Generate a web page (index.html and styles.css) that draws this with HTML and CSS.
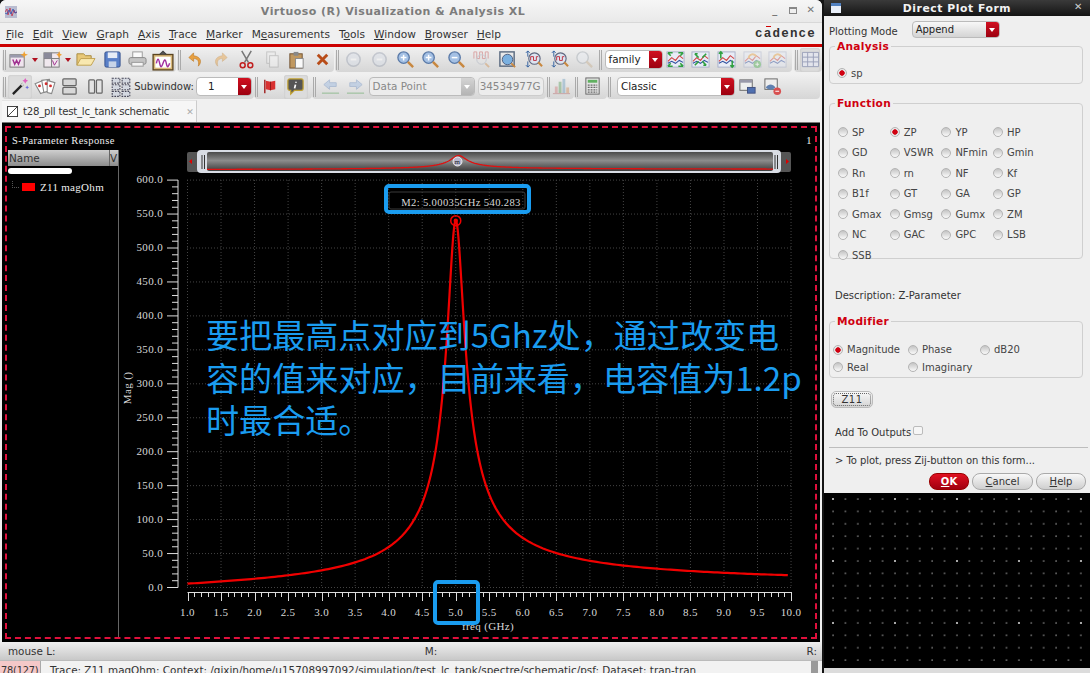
FILE: index.html
```html
<!DOCTYPE html>
<html lang="en">
<head>
    <meta charset="UTF-8">
    <title>Virtuoso (R) Visualization &amp; Analysis XL</title>
    <link rel="stylesheet" href="styles.css">
</head>
<body>
<div class="main">
    <div class="titlebar">
        <svg class="app-icon" viewBox="0 0 12 12"><rect width="12" height="12" fill="#b9bcd0"/><path d="M0 6l2-3 1 6 2-7 2 8 2-6 1 3 2-1" fill="none" stroke="#c0304a" stroke-width=".8"/><path d="M0 7l2 1 2-4 2 4 2-5 2 4 2-1" fill="none" stroke="#3050b0" stroke-width=".8"/></svg>
        <span class="title-text">Virtuoso (R) Visualization &amp; Analysis XL</span>
        <div class="win-btns"><span>_</span><span class="win-max"></span><span>✕</span></div>
    </div>

    <div class="menubar">
        <span><u>F</u>ile</span><span><u>E</u>dit</span><span><u>V</u>iew</span><span><u>G</u>raph</span><span><u>A</u>xis</span><span><u>T</u>race</span><span><u>M</u>arker</span><span>M<u>e</u>asurements</span><span>T<u>o</u>ols</span><span><u>W</u>indow</span><span><u>B</u>rowser</span><span><u>H</u>elp</span>
        <span class="logo">c<span class="logo-a">a</span>dence</span>
    </div>
    <div class="redline"></div>

    <div class="tbar">
        <div class="seg seg-a">
            <i class="grip"></i>
            <span class="ib w20"><svg viewBox="0 0 20 20"><rect x="1" y="5" width="15" height="13" fill="#f0e4ee" stroke="#777"/><rect x="1" y="5" width="15" height="3" fill="#9a9aac"/><path d="M4 10l2 5 2-4 2 4 2-5" fill="none" stroke="#a03090" stroke-width="1.500"/><path d="M16 1l1 3 3 1-3 1-1 3-1-3-3-1 3-1z" fill="#f0a030"/></svg></span>
            <span class="drop w16"></span>
            <span class="ib w17"><svg viewBox="0 0 20 20"><rect x="1" y="3" width="16" height="15" fill="#f0e8ee" stroke="#777"/><path d="M1 9h16M9 3v15" stroke="#777"/><rect x="1" y="3" width="8" height="6" fill="#8a8a9a"/><path d="M10 11l2 5 3-5" fill="none" stroke="#a03090"/><path d="M17 1l1 3 2 1-2 1-1 3-1-3-2-1 2-1z" fill="#f0a030"/></svg></span>
            <span class="drop w14"></span>
            <span class="ib w20 wide"><svg viewBox="0 0 22 20"><path d="M2 16V4h7l2 2h6v3" fill="#e8c878" stroke="#a88a40"/><path d="M2 16l4-7h15l-4 7z" fill="#f8e8b0" stroke="#c0a050"/></svg></span>
            <span class="ib w25 gap5"><svg viewBox="0 0 20 20"><rect x="2" y="2" width="16" height="16" rx="1.500" fill="#5a80c8" stroke="#34508c"/><rect x="5" y="2.500" width="10" height="6" fill="#e6ecf6"/><rect x="6" y="12" width="8" height="6" fill="#c8d4e8"/></svg></span>
            <span class="ib w25"><svg viewBox="0 0 20 20"><rect x="5" y="2" width="10" height="7" fill="#fafafa" stroke="#999"/><rect x="1" y="8" width="18" height="7" rx="2" fill="#c4c4c4" stroke="#888"/><rect x="4" y="13" width="12" height="4" fill="#f4f4f4" stroke="#999"/></svg></span>
            <span class="ib w25"><svg class="big" viewBox="0 0 20 20"><rect x="1" y="5" width="18" height="14" fill="#d8b878" stroke="#5a4420" stroke-width="1.200"/><rect x="3" y="7" width="14" height="10" fill="#fff"/><path d="M4 13c1-5 2-5 3 0s2 3 3 0 2-5 3 0 2 3 3 0" fill="none" stroke="#a030a0" stroke-width="1.300"/><path d="M7 5l3-3 3 3" fill="#555" stroke="#444"/></svg></span>
        </div>
        <div class="seg seg-b">
            <i class="grip"></i>
            <span class="ib w25"><svg viewBox="0 0 20 20"><path d="M8 3L3 8l5 4V9c4 0 6 2 5 8 4-4 3-10-5-11z" fill="#e8a040" stroke="#b87420" stroke-width=".6"/></svg></span>
            <span class="ib w25 dim"><svg viewBox="0 0 20 20"><path d="M12 3l5 5-5 4V9c-4 0-6 2-5 8-4-4-3-10 5-11z" fill="#e8a040" stroke="#b87420" stroke-width=".6"/></svg></span>
            <span class="ib w25"><svg viewBox="0 0 20 20"><path d="M5 1l7 12M15 1L8 13" stroke="#777" stroke-width="1.600"/><circle cx="6" cy="16" r="2.600" fill="none" stroke="#c02020" stroke-width="1.600"/><circle cx="14" cy="16" r="2.600" fill="none" stroke="#c02020" stroke-width="1.600"/></svg></span>
            <span class="ib w25 dim"><svg viewBox="0 0 20 20"><rect x="5" y="2" width="9" height="12" fill="#eee" stroke="#999"/><rect x="8" y="6" width="9" height="12" fill="#f6f6f6" stroke="#999"/></svg></span>
            <span class="ib w25"><svg viewBox="0 0 20 20"><rect x="3" y="4" width="13" height="15" fill="#c09860" stroke="#705030"/><rect x="7" y="2" width="5" height="4" fill="#888"/><rect x="9" y="9" width="8" height="10" fill="#fafafa" stroke="#888"/></svg></span>
            <span class="ib w25"><svg viewBox="0 0 20 20"><path d="M5 5l10 10M15 5L5 15" stroke="#b84c18" stroke-width="3"/></svg></span>
        </div>
        <div class="seg seg-c">
            <i class="grip"></i>
            <span class="ib w25 dim"><svg viewBox="0 0 20 20"><circle cx="10" cy="10" r="7" fill="#d8dee8" stroke="#98a0b0" stroke-width="1.600"/><path d="M7 10h6" stroke="#fff" stroke-width="2"/></svg></span>
            <span class="ib w27 dim"><svg viewBox="0 0 20 20"><circle cx="10" cy="10" r="7" fill="#d8dee8" stroke="#98a0b0" stroke-width="1.600"/><path d="M7 10h6" stroke="#fff" stroke-width="2"/></svg></span>
            <span class="ib w25"><svg viewBox="0 0 20 20"><use href="#mag"/><path d="M5 8h6M8 5v6" stroke="#fff" stroke-width="1.600"/></svg></span>
            <span class="ib w25"><svg viewBox="0 0 20 20"><use href="#mag"/><path d="M5 8h6M8 5v6" stroke="#fff" stroke-width="1.600"/></svg></span>
            <span class="ib w25"><svg viewBox="0 0 20 20"><use href="#mag"/><path d="M5 8h6" stroke="#fff" stroke-width="1.600"/></svg></span>
            <span class="ib w27 dim"><svg viewBox="0 0 20 20"><path d="M2 9V2h3v7h3V2h3v7h3V2h3v7" fill="none" stroke="#c85050"/><circle cx="10" cy="10" r="5" fill="none" stroke="#a0a8b8"/><path d="M14 14l4 4" stroke="#d09050" stroke-width="2"/></svg></span>
            <span class="ib w25"><svg viewBox="0 0 20 20"><rect x="2" y="2" width="15" height="15" fill="none" stroke="#5a6a80" stroke-width="1.500"/><circle cx="10" cy="10" r="5.500" fill="#7ab0e0" stroke="#506080"/><path d="M14 14l4 4" stroke="#c88840" stroke-width="2"/></svg></span>
            <span class="ib w27"><svg viewBox="0 0 20 20"><use href="#wavemag"/></svg></span>
            <span class="ib w25"><svg viewBox="0 0 20 20"><use href="#wavemag"/></svg></span>
            <span class="ib w25 dim"><svg viewBox="0 0 20 20"><circle cx="8" cy="8" r="6" fill="#e8ecf2" stroke="#a0a8b0" stroke-width="1.400"/><path d="M12 12l6 6" stroke="#c8b090" stroke-width="2.400"/></svg></span>
            <i class="grip"></i>
            <div class="combo combo-family"><span class="combo-val">family</span><span class="combo-btn"></span></div>
            <span class="ib w25"><svg viewBox="0 0 20 20"><use href="#trace"/><path d="M2 3h5M2 3l3 3M18 3h-5M18 3l-3 3M2 17h5M2 17l3-3M18 17h-5M18 17l-3-3" stroke="#30a040" stroke-width="1.600" fill="none"/></svg></span>
            <span class="ib w25"><svg viewBox="0 0 20 20"><use href="#trace"/><path d="M4 4l4 4M4 4h3M16 16l-4-4M16 16h-3M16 4l-4 4M4 16l4-4" stroke="#30a040" stroke-width="1.600" fill="none"/></svg></span>
            <span class="ib w26"><svg viewBox="0 0 20 20"><use href="#trace"/><path d="M4 9V2M2 4l2-2 2 2M16 11v7M14 16l2 2 2-2" stroke="#30a040" stroke-width="1.600" fill="none"/></svg></span>
            <span class="ib w26 dim"><svg viewBox="0 0 20 20"><use href="#trace"/><path d="M6 9c0-5 6-6 8-2" fill="none" stroke="#e8a040" stroke-width="2"/><circle cx="15" cy="15" r="4" fill="#50b050"/><path d="M13 15h4M15 13v4" stroke="#fff"/></svg></span>
            <span class="ib w25 dim"><svg viewBox="0 0 20 20"><use href="#trace"/><path d="M6 9c0-5 6-6 8-2" fill="none" stroke="#e8a040" stroke-width="2"/></svg></span>
        </div>
        <div class="seg seg-d">
            <i class="grip"></i>
            <span class="ib btn-on grid-btn"><svg viewBox="0 0 20 20"><path d="M1.500 2.500h17v15h-17zM1.500 7.500h17M1.500 12.500h17M7 2.500v15M13 2.500v15" fill="#e2e4ec" stroke="#9aa0b8"/></svg></span>
        </div>
    </div>

    <div class="tbar tbar-two">
        <div class="seg">
            <i class="grip"></i>
            <span class="ib btn-on wand-btn"><svg viewBox="0 0 20 20"><path d="M2 18L13 7" stroke="#222" stroke-width="2.400"/><path d="M11 9l3-3" stroke="#ddd" stroke-width="2.400"/><path d="M15 1l1 2 2 1-2 1-1 2-1-2-2-1 2-1z" fill="#e060c0"/><path d="M17 9l.7 1.300 1.300.7-1.300.7-.7 1.300-.7-1.300-1.300-.7 1.300-.7z" fill="#7070e0"/></svg></span>
            <span class="ib w25"><svg class="big" viewBox="0 0 20 20"><path d="M1 7l7-3 3 10-5 2z" fill="#fff" stroke="#888"/><path d="M7 4l7-1 1 10-6 2z" fill="#fff" stroke="#888"/><path d="M12 4l7 2-3 10-4-1z" fill="#fff" stroke="#888"/><circle cx="5" cy="9" r="1.300" fill="#d03030"/><circle cx="11" cy="7" r="1.300" fill="#d03030"/><circle cx="15" cy="9" r="1.300" fill="#d03030"/></svg></span>
            <span class="ib w25"><svg viewBox="0 0 20 20"><rect x="3" y="2" width="14" height="7" rx="1" fill="#d8d8d8" stroke="#666" stroke-width="1.300"/><rect x="3" y="11" width="14" height="7" rx="1" fill="#d8d8d8" stroke="#666" stroke-width="1.300"/></svg></span>
            <span class="ib w25"><svg viewBox="0 0 20 20"><rect x="3" y="3" width="6" height="14" rx="1" fill="#e4e4e4" stroke="#666" stroke-width="1.300"/><rect x="11" y="3" width="6" height="14" rx="1" fill="#e4e4e4" stroke="#666" stroke-width="1.300"/></svg></span>
            <span class="ib w25"><svg class="big" viewBox="0 0 20 20"><g fill="#d4d8e0" stroke="#445" stroke-dasharray="1.500 1"><rect x="2" y="2" width="7" height="4.500"/><rect x="11" y="2" width="7" height="4.500"/><rect x="2" y="8" width="7" height="4.500"/><rect x="11" y="8" width="7" height="4.500"/><rect x="2" y="14" width="7" height="4.500"/><rect x="11" y="14" width="7" height="4.500"/></g></svg></span>
            <span class="sub-label">Subwindow:</span>
            <div class="combo combo-sub"><span class="combo-val">1</span><span class="combo-btn"></span></div>
        </div>
        <div class="seg">
            <i class="grip"></i>
            <span class="ib flag-btn"><svg viewBox="0 0 20 20"><path d="M4 3v14" stroke="#a02020" stroke-width="1.500"/><path d="M5 4l5 1 5-1v9l-5 1-5-1z" fill="#d83030"/><path d="M10 5v9" stroke="#901818"/></svg></span>
            <span class="ib btn-on info-btn"><svg viewBox="0 0 20 20"><path d="M4 2h12a2 2 0 012 2v8a2 2 0 01-2 2H9l-4 4v-4H4a2 2 0 01-2-2V4a2 2 0 012-2z" fill="#555" stroke="#c0a030" stroke-width="1.300"/><path d="M10.500 5v1M10 8l-1 4" stroke="#fff" stroke-width="1.800"/></svg></span>
        </div>
        <div class="seg">
            <i class="grip"></i>
            <span class="ib w25 dim"><svg viewBox="0 0 20 20"><path d="M3 8l6-5v3h7v4H9v3z" fill="#9ab8e0" stroke="#7090c0"/><path d="M1 17h18" stroke="#50a050" stroke-width="1.200"/></svg></span>
            <span class="ib w25 dim"><svg viewBox="0 0 20 20"><path d="M17 8l-6-5v3H4v4h7v3z" fill="#9ab8e0" stroke="#7090c0"/><path d="M1 17h18" stroke="#50a050" stroke-width="1.200"/></svg></span>
            <div class="combo combo-point off"><span class="combo-val">Data Point</span><span class="combo-btn"></span></div>
            <div class="field off">34534977G</div>
        </div>
        <div class="seg">
            <i class="grip"></i>
            <span class="ib w20 dim"><svg viewBox="0 0 20 20"><rect x="3" y="10" width="3" height="7" fill="#d08080"/><rect x="7" y="5" width="3" height="12" fill="#60a060"/><rect x="11" y="2" width="3" height="15" fill="#70a0c0"/><rect x="15" y="11" width="3" height="6" fill="#d09060"/><path d="M1 17.500h18" stroke="#b06060"/></svg></span>
        </div>
        <div class="seg">
            <i class="grip"></i>
            <span class="ib w25"><svg viewBox="0 0 20 20"><rect x="3" y="1" width="14" height="17" fill="#e4e4e4" stroke="#666"/><rect x="5" y="3" width="10" height="3" fill="#60b060"/><path d="M5 8.500h10M5 11h10M5 13.500h10M5 16h10" stroke="#666" stroke-dasharray="2 1" stroke-width="1.400"/></svg></span>
        </div>
        <div class="seg seg-last">
            <i class="grip"></i>
            <div class="combo combo-classic"><span class="combo-val">Classic</span><span class="combo-btn"></span></div>
            <span class="ib w25"><svg viewBox="0 0 20 20"><rect x="2" y="3" width="13" height="11" fill="#eee" stroke="#666"/><rect x="2" y="3" width="13" height="3" fill="#99a"/><rect x="10" y="11" width="8" height="6" fill="#5070b0" stroke="#405080"/></svg></span>
            <span class="ib w25"><svg viewBox="0 0 20 20"><rect x="2" y="2" width="13" height="11" fill="#eee" stroke="#666"/><path d="M3 11c3-4 7-4 10 0-3 3-7 3-10 0z" fill="#6080b0"/><circle cx="15" cy="15" r="4" fill="#d85050"/><path d="M13 15h4" stroke="#fff" stroke-width="1.300"/></svg></span>
        </div>
    </div>

    <div class="tabrow">
        <div class="tab">
            <svg class="tab-icon" viewBox="0 0 12 12"><rect x=".5" y=".5" width="11" height="11" fill="#fff" stroke="#333"/><path d="M1 11L11 1" stroke="#333"/></svg>
            <span class="tab-name">t28_pll test_lc_tank schematic</span>
            <span class="tab-x">✕</span>
        </div>
    </div>

    <div class="plot">
        <div class="plot-inner">
            <div class="plot-head"><span>S-Parameter Response</span><span>1</span></div>
            <div class="plot-body">
                <div class="legend">
                    <div class="legend-head"><span>Name</span><span class="legend-v">V</span></div>
                    <div class="legend-pill"></div>
                    <div class="legend-row"><i class="legend-swatch"></i><span>Z11 magOhm</span></div>
                </div>
                <svg class="chart" id="chart" viewBox="119 150 697 486" width="697" height="486"></svg>
            </div>
        </div>
        <div class="callout callout-marker"></div>
        <div class="callout callout-freq"></div>
        <div class="note">要把最高点对应到5Ghz处，通过改变电<br>容的值来对应，目前来看，电容值为1.2p<br>时最合适。</div>
    </div>

    <div class="mousebar"><span>mouse L:</span><span>M:</span><span>R:</span></div>
    <div class="statusbar">
        <span class="status-count">78(127)</span>
        <span class="status-text">Trace: Z11 magOhm: Context: /qixin/home/u15708997092/simulation/test_lc_tank/spectre/schematic/psf: Dataset: tran-tran</span>
        <span class="status-scroll"></span>
    </div>
</div>

<div class="side">
    <div class="side-title">
        <svg class="side-icon" viewBox="0 0 10 10"><rect width="10" height="10" fill="#e8eef8"/><rect width="10" height="3" fill="#5080c0"/></svg>
        <span>Direct Plot Form</span>
        <span class="side-x">✕</span>
    </div>
    <div class="form">
        <div class="mode-row">
            <span>Plotting Mode</span>
            <div class="combo combo-mode"><span class="combo-val">Append</span><span class="combo-btn"></span></div>
        </div>
        <fieldset class="group group-analysis">
            <legend>Analysis</legend>
            <label class="opt"><i class="radio on"></i>sp</label>
        </fieldset>
        <fieldset class="group group-function">
            <legend>Function</legend>
            <div class="func-grid">
                <label class="opt"><i class="radio"></i>SP</label>
                <label class="opt"><i class="radio on"></i>ZP</label>
                <label class="opt"><i class="radio"></i>YP</label>
                <label class="opt"><i class="radio"></i>HP</label>
                <label class="opt"><i class="radio"></i>GD</label>
                <label class="opt"><i class="radio"></i>VSWR</label>
                <label class="opt"><i class="radio"></i>NFmin</label>
                <label class="opt"><i class="radio"></i>Gmin</label>
                <label class="opt"><i class="radio"></i>Rn</label>
                <label class="opt"><i class="radio"></i>rn</label>
                <label class="opt"><i class="radio"></i>NF</label>
                <label class="opt"><i class="radio"></i>Kf</label>
                <label class="opt"><i class="radio"></i>B1f</label>
                <label class="opt"><i class="radio"></i>GT</label>
                <label class="opt"><i class="radio"></i>GA</label>
                <label class="opt"><i class="radio"></i>GP</label>
                <label class="opt"><i class="radio"></i>Gmax</label>
                <label class="opt"><i class="radio"></i>Gmsg</label>
                <label class="opt"><i class="radio"></i>Gumx</label>
                <label class="opt"><i class="radio"></i>ZM</label>
                <label class="opt"><i class="radio"></i>NC</label>
                <label class="opt"><i class="radio"></i>GAC</label>
                <label class="opt"><i class="radio"></i>GPC</label>
                <label class="opt"><i class="radio"></i>LSB</label>
                <label class="opt"><i class="radio"></i>SSB</label>
            </div>
        </fieldset>
        <div class="desc">Description: Z-Parameter</div>
        <fieldset class="group group-modifier">
            <legend>Modifier</legend>
            <div class="mod-grid">
                <label class="opt"><i class="radio on"></i>Magnitude</label>
                <label class="opt"><i class="radio"></i>Phase</label>
                <label class="opt"><i class="radio"></i>dB20</label>
                <label class="opt"><i class="radio"></i>Real</label>
                <label class="opt"><i class="radio"></i>Imaginary</label>
            </div>
        </fieldset>
        <button class="z-btn">Z11</button>
        <div class="add-row">Add To Outputs<i class="check"></i></div>
        <div class="sep"></div>
        <div class="hint">&gt; To plot, press Zij-button on this form...</div>
        <div class="actions">
            <button class="pill pill-ok"><u>O</u>K</button>
            <button class="pill pill-cancel"><u>C</u>ancel</button>
            <button class="pill pill-help"><u>H</u>elp</button>
        </div>
    </div>
    <div class="dots"></div>
</div>

<svg class="defs" width="0" height="0">
    <defs>
        <g id="mag"><circle cx="8" cy="8" r="6" fill="#a4c0e4" stroke="#5a7aa8" stroke-width="1.400"/><path d="M12.500 12.500l5.500 5.500" stroke="#c88840" stroke-width="2.600"/></g>
        <g id="wavemag"><path d="M4 1v6M4 12v6M2 3l2-2 2 2M2 16l2 2 2-2" stroke="#3060a0" fill="none"/><circle cx="11" cy="9" r="6" fill="#dce4f0" stroke="#606880" stroke-width="1.200"/><path d="M7 11V7h3v4h3V7h2" fill="none" stroke="#c03040"/><path d="M15 13l4 4" stroke="#c88840" stroke-width="2.200"/></g>
        <g id="trace"><rect x="1" y="2" width="18" height="16" fill="#e8ecf6" stroke="#a8b0c8"/><path d="M2 12l4-4 4 3 4-5 4 3" fill="none" stroke="#d04040" stroke-width="1.100"/><path d="M2 14l4-2 4 2 4-3 4 2" fill="none" stroke="#3050a0" stroke-width="1.100"/></g>
    </defs>
</svg>
<script src="chart.js"></script>
</body>
</html>
```

FILE: styles.css
```css
html, body {
    margin: 0;
    height: 673px;
    overflow: hidden;
    background: #141414;
}
body {
    display: flex;
    gap: 2px;
    font-family: "DejaVu Sans", sans-serif;
    font-size: 10.4px;
    color: #333;
}
.main {
    width: 822px;
    height: 684px;
    flex: none;
    display: flex;
    flex-direction: column;
    background: #f0f0f0;
    border-radius: 6px 6px 0 0;
    overflow: hidden;
}

/* window title */
.titlebar {
    height: 23px;
    flex: none;
    display: flex;
    align-items: center;
    justify-content: center;
    position: relative;
    background: linear-gradient(#f6f6f6, #e9e9e9);
    border-bottom: 1px solid #d8d8d8;
    box-sizing: border-box;
    font-weight: bold;
    font-size: 11px;
    letter-spacing: 0.45px;
    color: #7c7c7c;
}
.title-text {
    margin-left: -36px;
}
.app-icon {
    position: absolute;
    left: 5px;
    top: 6px;
    width: 12px;
    height: 12px;
}
.win-btns {
    position: absolute;
    right: 6px;
    top: 4px;
    display: flex;
    gap: 8px;
    font-size: 10px;
    color: #777;
}
.win-btns span {
    width: 10px;
    height: 13px;
    text-align: center;
}
.win-btns .win-max {
    width: 8px;
    height: 7px;
    margin: 3px 1px 0;
    border: 1px solid #888;
    border-top-width: 2px;
    box-sizing: border-box;
}

/* menu */
.menubar {
    height: 21px;
    flex: none;
    display: flex;
    align-items: center;
    gap: 9px;
    padding-left: 6px;
    box-sizing: border-box;
    font-size: 10.6px;
    color: #333;
}
.logo {
    margin-left: auto;
    margin-right: 6px;
    font-family: "Liberation Mono", monospace;
    font-size: 12.5px;
    font-weight: bold;
    letter-spacing: 1.2px;
    color: #333;
}
.logo-a {
    position: relative;
}
.logo-a::before {
    content: "";
    position: absolute;
    left: 2px;
    top: -1px;
    width: 5px;
    height: 1px;
    background: #d00000;
}
.redline {
    height: 3px;
    flex: none;
    background: #cc0000;
}

/* toolbars */
.tbar {
    height: 27px;
    flex: none;
    display: flex;
    padding-left: 2px;
    box-sizing: border-box;
}
.tbar-two {
    height: 26px;
}
.seg {
    display: flex;
    align-items: center;
    height: 25px;
    padding-right: 2px;
    box-sizing: border-box;
    border-radius: 0 0 4px 4px;
    background: linear-gradient(#f0f0f0, #d6d6d6);
}
.seg-a {
    width: 174px;
}
.seg-b {
    width: 157px;
    margin-left: 1px;
}
.seg-c {
    margin-left: 1px;
}
.seg-d {
    margin-left: 2px;
    flex: 1;
    margin-right: 2px;
}
.seg-last {
    flex: 1;
    margin-right: 2px;
}
.grip {
    width: 3px;
    height: 20px;
    margin: 0 2px 0 1px;
    flex: none;
    border-left: 1px solid #aaa;
    border-right: 1px solid #aaa;
    box-sizing: border-box;
}
.ib {
    height: 24px;
    flex: none;
    display: flex;
    align-items: center;
    justify-content: center;
}
.ib svg {
    width: 19px;
    height: 19px;
    flex: none;
}
.ib svg.big {
    width: 22px;
    height: 22px;
}
.ib.wide svg {
    width: 21px;
}
.w17 { width: 17px; }
.w20 { width: 20px; }
.w25 { width: 25.3px; }
.w26 { width: 26px; }
.w27 { width: 26.5px; }
.gap5 { margin-left: 5px; }
.dim svg { opacity: 0.45; }
.drop {
    height: 24px;
    flex: none;
    position: relative;
}
.w14 { width: 14px; }
.w16 { width: 16px; }
.drop::after {
    content: "";
    position: absolute;
    left: 4px;
    top: 10px;
    border: 3.5px solid transparent;
    border-top: 4px solid #b01020;
    border-bottom: 0;
}
.btn-on {
    border-radius: 3px;
    background: #dcdcdc;
    box-shadow: inset 0 0 2px #bbb;
}
.wand-btn { width: 24px; }
.flag-btn { width: 22px; }
.info-btn { width: 24px; margin: 0 2px; }
.grid-btn { width: 20px; }
.sub-label {
    margin: 0 2px 0 1px;
    font-size: 10px;
}

/* combos */
.combo {
    height: 19px;
    flex: none;
    display: flex;
    border-radius: 4px;
    border: 1px solid #bbb;
    box-sizing: border-box;
    background: #fff;
    overflow: hidden;
}
.combo-val {
    flex: 1;
    padding-left: 3px;
    line-height: 17px;
    color: #222;
}
.combo-btn {
    width: 13px;
    position: relative;
    background: linear-gradient(#d01020, #9c0010);
}
.combo-btn::after {
    content: "";
    position: absolute;
    left: 3px;
    top: 7px;
    border: 3.5px solid transparent;
    border-top: 4px solid #fff;
    border-bottom: 0;
}
.combo.off {
    background: #ececec;
}
.combo.off .combo-val {
    color: #888;
}
.combo.off .combo-btn {
    background: linear-gradient(#d4d4d4, #b4b4b4);
}
.combo-family { width: 58px; margin-left: 1px; }
.combo-sub { width: 56px; }
.combo-sub .combo-val { padding-left: 11px; }
.combo-point { width: 106px; }
.combo-classic { width: 118px; margin-left: 4px; }
.field {
    width: 66px;
    height: 19px;
    margin-left: 3px;
    border: 1px solid #ccc;
    border-radius: 4px;
    box-sizing: border-box;
    background: #ececec;
    color: #888;
    line-height: 17px;
    text-align: right;
    padding-right: 2px;
    overflow: hidden;
    white-space: nowrap;
}

/* tab */
.tabrow {
    height: 22px;
    flex: none;
    padding-left: 2px;
}
.tab {
    width: 195px;
    height: 22px;
    display: flex;
    align-items: center;
    gap: 5px;
    padding-left: 5px;
    box-sizing: border-box;
    background: #f6f6f6;
    border-right: 1px solid #ccc;
    border-top: 1px solid #e4e4e4;
    font-size: 10.2px;
}
.tab-icon {
    width: 11px;
    height: 11px;
    flex: none;
}
.tab-name {
    white-space: nowrap;
    letter-spacing: -0.25px;
}
.tab-x {
    margin-left: 12px;
    color: #aaa;
    font-size: 9px;
}

/* plot */
.plot {
    height: 520px;
    flex: none;
    margin: 0 2px;
    padding: 3px;
    box-sizing: border-box;
    background: #000;
    position: relative;
    border-top: 1px solid #777;
}
.plot-inner {
    height: 100%;
    border: 2px dashed #e0103c;
    box-sizing: border-box;
    display: flex;
    flex-direction: column;
    font-family: "Liberation Serif", serif;
    color: #eee;
}
.plot-head {
    height: 22px;
    flex: none;
    display: flex;
    justify-content: space-between;
    align-items: center;
    padding: 3px 3px 0 5px;
    box-sizing: border-box;
    font-size: 10.5px;
    letter-spacing: 0.4px;
}
.plot-body {
    flex: 1;
    display: flex;
    min-height: 0;
}
.legend {
    width: 112px;
    flex: none;
    box-sizing: border-box;
    border-right: 1px solid #666;
    padding-left: 1px;
}
.legend-head {
    height: 16px;
    display: flex;
    align-items: center;
    justify-content: space-between;
    background: linear-gradient(#cfcfcf, #8c8c8c);
    font-family: "DejaVu Sans", sans-serif;
    color: #333;
    padding-left: 1px;
}
.legend-v {
    width: 8px;
    border-left: 1px solid #666;
    height: 100%;
    line-height: 16px;
    overflow: hidden;
}
.legend-pill {
    width: 64px;
    height: 6px;
    margin-top: 2px;
    border-radius: 3px;
    background: #fff;
}
.legend-row {
    display: flex;
    align-items: center;
    gap: 5px;
    margin: 7px 0 0 4px;
    font-size: 11px;
    letter-spacing: 0.3px;
}
.legend-row::before {
    content: "";
    width: 6px;
    height: 6px;
    margin: -6px -2px 0 0;
    border-left: 1px dotted #555;
    border-bottom: 1px dotted #555;
}
.legend-swatch {
    width: 13px;
    height: 8px;
    background: #f00;
}
.chart {
    flex: none;
    display: block;
}
.chart text {
    font-family: "Liberation Serif", serif;
    font-size: 11px;
    letter-spacing: 0.35px;
    fill: #d8d8d8;
}

/* blue annotations drawn over the plot */
.callout {
    position: absolute;
    box-sizing: border-box;
    border: 4px solid #1a9cf0;
    border-radius: 5px;
}
.callout-marker {
    left: 382px;
    top: 61px;
    width: 147px;
    height: 30px;
}
.callout-freq {
    left: 431px;
    top: 457px;
    width: 47px;
    height: 45px;
}
.note {
    position: absolute;
    left: 204px;
    top: 190px;
    width: 610px;
    font-family: "Noto Sans CJK SC", sans-serif;
    font-size: 33.1px;
    line-height: 42.5px;
    white-space: nowrap;
    color: #1a9cf0;
}

/* bottom bars */
.mousebar {
    height: 18px;
    flex: none;
    display: flex;
    justify-content: space-between;
    align-items: center;
    padding: 0 5px 0 8px;
    background: linear-gradient(#efefef, #c8c8c8);
    box-sizing: border-box;
}
.statusbar {
    height: 20px;
    flex: none;
    display: flex;
    background: #f2f2f2;
    border-top: 1px solid #bbb;
    box-sizing: border-box;
}
.status-count {
    width: 41px;
    flex: none;
    background: #f4c8c8;
    border-right: 1px solid #aaa;
    padding: 1px 0 0 1px;
    box-sizing: border-box;
    line-height: 17px;
    font-size: 9.8px;
    letter-spacing: -0.2px;
    white-space: nowrap;
}
.status-text {
    flex: 1;
    padding: 1px 0 0 9px;
    line-height: 17px;
    white-space: nowrap;
}
.status-scroll {
    width: 7px;
    margin-right: 4px;
    background: #9a9a9a;
}

/* form at the right */
.side {
    flex: 1;
    display: flex;
    flex-direction: column;
    background: #dcdcdc;
    min-width: 0;
}
.side-title {
    height: 16px;
    flex: none;
    display: flex;
    align-items: center;
    justify-content: center;
    position: relative;
    background: linear-gradient(#3a3a3a, #141414);
    color: #f2f2f2;
    font-weight: bold;
    font-size: 10.8px;
    letter-spacing: 0.55px;
}
.side-icon {
    position: absolute;
    left: 7px;
    top: 3px;
    width: 10px;
    height: 10px;
}
.side-x {
    position: absolute;
    right: 7px;
    top: 1px;
    color: #ccc;
    font-size: 10px;
}
.form {
    height: 477px;
    flex: none;
    padding: 0 7px 0 5px;
    box-sizing: border-box;
    background: #efefef;
    font-size: 10px;
}
.mode-row {
    height: 24px;
    display: flex;
    gap: 14px;
}
.mode-row > span {
    padding-top: 10px;
    line-height: 12px;
}
.combo-mode {
    width: 88px;
    height: 17px;
    margin-top: 5px;
    background: linear-gradient(#f8f8f8, #d4d4d4);
}
.combo-mode .combo-val {
    line-height: 15px;
}
.combo-mode .combo-btn::after {
    top: 6px;
}
.group {
    margin: 0;
    padding: 0;
    min-width: 0;
    box-sizing: border-box;
    border: 1px solid #cfcfcf;
    border-radius: 4px;
}
.group legend {
    margin-left: 5px;
    padding: 0 2px;
    height: 13px;
    line-height: 13px;
    font-weight: bold;
    font-size: 10.6px;
    letter-spacing: 0.3px;
    color: #d00010;
}
.group-analysis {
    height: 44px;
    padding-top: 13px;
}
.group-function {
    height: 162px;
    margin-top: 13px;
    padding-top: 12px;
}
.group-modifier {
    height: 63px;
    margin-top: 12px;
    padding-top: 13px;
}
.opt {
    display: flex;
    align-items: center;
    gap: 4px;
    white-space: nowrap;
    color: #444;
}
.radio {
    width: 10px;
    height: 10px;
    flex: none;
    border-radius: 50%;
    box-sizing: border-box;
    border: 1px solid #b4b4b4;
    background: linear-gradient(#c4c4c4, #fafafa);
}
.radio.on {
    background: radial-gradient(circle, #d00010 0 2.4px, #e8e8e8 3px);
}
.func-grid {
    display: grid;
    grid-template-columns: repeat(4, 51.7px);
    grid-auto-rows: 20.5px;
    align-items: center;
    padding-left: 8px;
}
.mod-grid {
    display: grid;
    grid-template-columns: 75px 72px 1fr;
    grid-auto-rows: 17.5px;
    align-items: center;
    padding-left: 3px;
}
.group-analysis .opt {
    padding-left: 7px;
    height: 14px;
}
.desc {
    height: 16px;
    line-height: 18px;
    margin-top: 28px;
    padding-left: 6px;
}
.z-btn {
    display: block;
    width: 42px;
    height: 17px;
    margin: 13px 0 0 2px;
    padding: 0;
    border: 1px solid #bbb;
    border-radius: 5px;
    outline: 1px dotted #666;
    outline-offset: -3px;
    background: linear-gradient(#f8f8f8, #d4d4d4);
    font: inherit;
    letter-spacing: 0.5px;
    color: #333;
}
.add-row {
    height: 14px;
    line-height: 16px;
    margin-top: 17px;
    padding-left: 6px;
    display: flex;
}
.check {
    width: 10px;
    height: 9px;
    margin: 1px 0 0 2px;
    border: 1px solid #bbb;
    border-radius: 2px;
    box-sizing: border-box;
    background: #f6f6f6;
}
.sep {
    height: 1px;
    margin: 8px -5px 0 0;
    background: #bdbdbd;
}
.hint {
    height: 14px;
    line-height: 16px;
    margin-top: 5px;
    padding-left: 6px;
    letter-spacing: -0.07px;
}
.actions {
    display: flex;
    justify-content: flex-end;
    gap: 3px;
    margin: 6px -3px 0 0;
}
.pill {
    height: 17px;
    padding: 0;
    border: 1px solid #aaa;
    border-radius: 8px;
    background: linear-gradient(#f8f8f8, #cfcfcf);
    font: inherit;
    color: #333;
}
.pill-ok {
    width: 40px;
    border-color: #900;
    background: linear-gradient(#e01020, #a00010);
    color: #fff;
    font-weight: bold;
}
.pill-cancel { width: 61px; }
.pill-help { width: 50px; }
.dots {
    height: 175px;
    flex: none;
    background-color: #000;
    background-image:
        radial-gradient(circle at 1px 1px, #aaa 0 0.7px, transparent 1px),
        radial-gradient(circle at 1px 1px, #666 0 0.6px, transparent 0.9px);
    background-size: 62px 62px, 12.4px 12.4px;
    background-position: 8px 5px, 8px 5px;
}
.defs {
    position: absolute;
}
```

FILE: chart.js
```js
// draws the Z11 plot: grid, axes, curve, overview slider
var NS = 'http://www.w3.org/2000/svg';
var chart = document.getElementById('chart');

function add(tag, attrs, text, parent) {
    var el = document.createElementNS(NS, tag);
    for (var k in attrs) el.setAttribute(k, attrs[k]);
    if (text) el.textContent = text;
    (parent || chart).appendChild(el);
    return el;
}

function xOf(f) { return 187.5 + (f - 1) * 67.06; }
function yOf(v) { return 587.5 - v * 0.679; }
function z(f) {
    var d = f / 5.00035 - 5.00035 / f;
    return 540.283 / Math.sqrt(1 + 20 * 20 * d * d);
}

// grid
for (var g = 1; g <= 10.001; g += 0.5) {
    add('path', {d: 'M' + xOf(g) + ' 180V587', stroke: '#444', 'stroke-dasharray': '1 2', fill: 'none'});
}
for (var v = 0; v <= 600; v += 50) {
    add('path', {d: 'M187 ' + yOf(v) + 'H791', stroke: '#444', 'stroke-dasharray': '1 2', fill: 'none'});
    add('text', {x: 163, y: yOf(v) + 3, 'text-anchor': 'end'}, v.toFixed(1));
}

// y axis ruler
var yTicks = 'M178 180V587.500';
for (var t = 0; t <= 600; t += 10) {
    yTicks += 'M' + (t % 50 === 0 ? 167 : 172) + ' ' + yOf(t) + 'H178';
}
add('path', {d: yTicks, stroke: '#ddd', fill: 'none'});

// x axis ruler
var xTicks = 'M187.500 592.500H791';
for (var i = 0; i <= 90; i++) {
    var px = Math.round(xOf(1 + i / 10)) + 0.5;
    xTicks += 'M' + px + ' 592V' + (i % 5 === 0 ? 601 : 597);
}
add('path', {d: xTicks, stroke: '#ddd', fill: 'none'});
for (var n = 2; n <= 20; n++) {
    add('text', {x: xOf(n / 2), y: 616, 'text-anchor': 'middle'}, (n / 2).toFixed(1));
}
add('text', {x: 488, y: 630, 'text-anchor': 'middle'}, 'freq (GHz)');
add('text', {x: 131, y: 388, 'text-anchor': 'middle', transform: 'rotate(-90 131 388)'}, 'Mag ()');

// overview slider
var defs = add('defs', {});
var grad = add('linearGradient', {id: 'slide', x1: 0, y1: 0, x2: 0, y2: 1}, null, defs);
add('stop', {offset: '0', 'stop-color': '#4a4a4a'}, null, grad);
add('stop', {offset: '.45', 'stop-color': '#8c8c8c'}, null, grad);
add('stop', {offset: '1', 'stop-color': '#3c3c3c'}, null, grad);
add('rect', {x: 187, y: 152, width: 604, height: 20, fill: '#555', rx: 2});
add('path', {d: 'M189 161.500l3-2.500v5zM789 161.500l-3-2.500v5z', fill: '#d00'});
add('rect', {x: 197, y: 150, width: 584, height: 23, rx: 4, fill: '#d8dce4'});
add('rect', {x: 207, y: 152, width: 566, height: 19, fill: 'url(#slide)', rx: 2});
add('path', {d: 'M202 155v14M204.500 155v14M775 155v14M777.500 155v14', stroke: '#333', fill: 'none'});

var mini = '';
for (var a = 207; a <= 773; a += 1) {
    var mf = 1 + (a - 207) / 566 * 9;
    mini += (mini ? 'L' : 'M') + a + ' ' + (169.5 - z(mf) / 540 * 14).toFixed(2);
}
add('path', {d: mini, stroke: '#e01010', 'stroke-width': 1.3, fill: 'none'});
add('circle', {cx: 457.500, cy: 161.500, r: 4.5, fill: '#b8b8d0', stroke: '#eee'});
add('text', {x: 457.500, y: 164, 'text-anchor': 'middle', style: 'font-size:7px;fill:#222'}, 'm');

// curve, with a finer step around the peak
var d = '';
for (var f = 1; f <= 10; f += (f > 4.4 && f < 5.6) ? 0.004 : 0.05) {
    d += (d ? 'L' : 'M') + xOf(f).toFixed(2) + ' ' + yOf(z(f)).toFixed(2);
}
add('path', {d: d, stroke: '#f00000', 'stroke-width': 2.2, fill: 'none'});

// marker
add('text', {x: 461, y: 205.500, 'text-anchor': 'middle', style: 'font-size:10.6px'}, 'M2: 5.00035GHz 540.283');
add('rect', {x: 389, y: 192, width: 136, height: 17, rx: 2, fill: 'none', stroke: '#3a3a3a'});
add('circle', {cx: xOf(5.00035), cy: yOf(540.283), r: 5, fill: 'none', stroke: '#f00000', 'stroke-width': 1.5});
add('circle', {cx: xOf(5.00035), cy: yOf(540.283), r: 2.2, fill: '#f00000'});
```
